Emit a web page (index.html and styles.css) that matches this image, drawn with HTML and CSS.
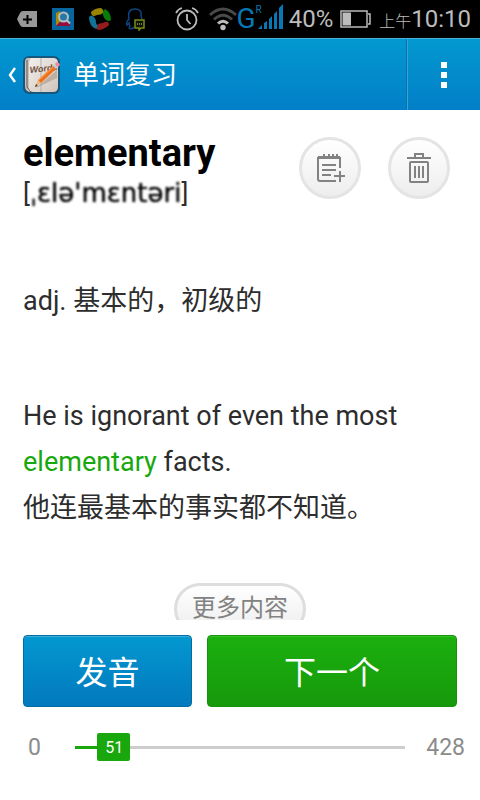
FILE: index.html
```html
<!DOCTYPE html>
<html lang="zh-CN">
<head>
<meta charset="utf-8">
<meta name="viewport" content="width=device-width, initial-scale=1">
<title>单词复习</title>
<link rel="stylesheet" href="styles.css">
</head>
<body>
<div class="status">
  <div class="status-left">
    <svg width="20" height="18" viewBox="0 0 20 18"><path d="M6 1H20V17H6Q4 17 3 15L0 9L3 3Q4 1 6 1Z" fill="#989898"/><path d="M10.500 5V14M6 9.500H15" stroke="#000" stroke-width="2"/></svg>
    <svg width="22" height="22" viewBox="0 0 22 22"><path d="M0 0H22V22H0Z" fill="#07669d"/><path d="M4 5L8 3V14L4 18Z" fill="#aa8b00"/><path d="M4 18L8 14H18V18Z" fill="#970b40"/><circle cx="11.500" cy="9" r="4.500" fill="#2879a3" stroke="#b4bdc3" stroke-width="2"/><path d="M14.500 12L18 15.500" stroke="#b4bdc3" stroke-width="2"/></svg>
    <svg width="22" height="22" viewBox="0 0 22 22"><path d="M2 4Q6 0 12 0Q15 2 14 5Q12 7 8 7Q4 9 3 7Q2 6 2 4Z" fill="#9a8500"/><path d="M16 1Q22 4 22 12Q20 14 17 12Q15 11 14 7Q13 3 16 1Z" fill="#087b09"/><path d="M20 17Q15 22 9 22Q6 20 8 17Q10 15 14 15Q17 13 19 14Q20 15 20 17Z" fill="#931d1d"/><path d="M0 9Q2 6 5 9Q7 11 7 15Q10 19 7 21Q0 18 0 9Z" fill="#117398"/></svg>
    <svg width="20" height="23" viewBox="0 0 20 23" fill="none"><path d="M8 19Q6 22 3 20L4 18Q3 17 3 15L1 17Q0 14 3 11Q1 1 9 1Q16 1 15 8L16 11" stroke="#0c4686" stroke-width="1.500"/><path d="M9 12H18V20H15L13 22V20H9Z" fill="#10150a" stroke="#788d18" stroke-width="1.500"/><path d="M11 16H16.500" stroke="#91a23b" stroke-width="1.500" stroke-dasharray="1 1"/></svg>
  </div>
  <div class="status-right">
    <svg width="24" height="24" viewBox="0 0 24 24" fill="none" stroke="#bcbcbc" stroke-width="1.800"><circle cx="12" cy="13" r="9.500"/><path d="M12 7V13L15.500 17M1 6Q3 2 7 1M17 1Q21 2 23 6"/></svg>
    <svg class="wifi" width="28" height="24" viewBox="0 0 28 24" fill="none" stroke-width="3"><path d="M1 8Q14 -4 27 8" stroke="#494949"/><path d="M5 12.500Q14 4 23 12.500" stroke="#494949"/><path d="M9 16.500Q14 12 19 16.500" stroke="#bcbcbc"/><circle cx="14" cy="20.500" r="2.700" fill="#bcbcbc"/></svg>
    <span class="network">G<sup>R</sup></span>
    <svg class="signal" width="25" height="25" viewBox="0 0 25 25" fill="#0878b4"><path d="M0 25L4 21V25ZM6 19L9 17V25H6ZM11 15L14 12V25H11ZM16 10L19 7V25H16ZM21 4L25 0V25H21Z"/></svg>
    <span class="percent">40%</span>
    <svg class="battery" width="31" height="18" viewBox="0 0 31 18"><path d="M1 1H27V17H1ZM28 4H30V14H28" fill="none" stroke="#bcbcbc" stroke-width="1.500"/><path d="M2.500 2.500H11V15.500H2.500Z" fill="#bcbcbc"/></svg>
    <span class="clock"><small>上午</small>10:10</span>
  </div>
</div>

<header class="bar">
  <button class="back" type="button" aria-label="返回">
    <svg width="8" height="16" viewBox="0 0 8 16"><path d="M7 1L2 8L7 15" fill="none" stroke="#fff" stroke-width="2.400"/></svg>
    <svg width="40" height="40" viewBox="0 0 40 40">
      <defs><linearGradient id="page" x2="1" y2="1"><stop stop-color="#f3efec"/><stop offset="1" stop-color="#cfc5bd"/></linearGradient></defs>
      <rect x="1" y="1" width="37" height="38" rx="6" fill="#15577d"/>
      <path d="M6 3H16L9 37Q3 37 3 31V7Q3 3 6 3Z" fill="#c9c1bc"/>
      <path d="M5 5V32L9 37" fill="none" stroke="#66564e"/>
      <path d="M9 3H31Q36 3 36 8V32Q36 37 31 37H12Q7 37 7 32V7Z" fill="url(#page)"/>
      <path d="M19 3V37" stroke="#b8afa8"/>
      <text x="8" y="18" font-family="Liberation Sans" font-size="9" font-weight="bold" font-style="italic" fill="#70513c" transform="rotate(-6 8 18)">Words</text>
      <path d="M14 33L35 15V23Z" fill="#a99686" opacity=".6"/>
      <path d="M13 32L16 25L19 28Z" fill="#e9b979"/><path d="M16 25L31 11L34 14L19 28Z" fill="#ed721b"/><path d="M17 25L31 12" stroke="#ffa457"/>
      <path d="M31 11L33 9L36 12L34 14Z" fill="#ccc9c8"/><path d="M33 9Q34 6 37 8Q39 10 36 12Z" fill="#ed8aa1"/><path d="M13 32L14 29L16 31Z" fill="#4c3a30"/>
    </svg>
  </button>
  <h1>单词复习</h1>
  <button class="menu" type="button" aria-label="菜单"><i></i><i></i><i></i></button>
</header>

<main class="card">
  <div class="head">
    <div class="entry">
      <h2>elementary</h2>
      <p class="ipa">[<span>ˌɛlə'mɛntəri</span>]</p>
    </div>
    <div class="tools">
      <button class="round" type="button" aria-label="加入生词本">
        <svg width="30" height="30" viewBox="0 0 30 30" fill="none" stroke="#828282" stroke-width="2"><path d="M21 28H5Q3 28 3 26V5H25V15M3 4H25"/><path d="M9 1V5M14 1V5M18 1V5M22 1V5M7 12H21M7 17H21M7 22H16M25 18V29M19 23H30"/></svg>
      </button>
      <button class="round" type="button" aria-label="删除">
        <svg width="26" height="32" viewBox="0 0 26 32" fill="none" stroke="#828282" stroke-width="2"><path d="M1 6H25M9 5V2H17V5"/><rect x="4" y="10" width="18" height="20" rx="1"/><path d="M9 14V26M13 14V26M17 14V26"/></svg>
      </button>
    </div>
  </div>
  <p class="meaning">adj. 基本的，初级的</p>
  <p class="example">He is ignorant of even the most <em>elementary</em> facts.<br>他连最基本的事实都不知道。</p>
  <button class="more" type="button">更多内容</button>
</main>

<footer>
  <div class="actions">
    <button class="speak" type="button">发音</button>
    <button class="next" type="button">下一个</button>
  </div>
  <div class="progress">
    <span class="min">0</span>
    <div class="slider" style="--value: 51; --max: 428">
      <input id="position" type="range" min="0" max="428" value="51" aria-label="进度">
      <output for="position">51</output>
    </div>
    <span class="max">428</span>
  </div>
</footer>
</body>
</html>
```
FILE: styles.css
```css
* { box-sizing: border-box; }
body, h1, h2, p { margin: 0; }
body {
  display: flex;
  flex-direction: column;
  height: 100vh;
  background: #fff;
  color: #2d2d2d;
  font-family: Roboto, "Noto Sans CJK SC", sans-serif;
}
button {
  padding: 0;
  border: 0;
  background: none;
  color: inherit;
  font: inherit;
}
svg { display: block; flex: none; }

.status {
  display: flex;
  flex: none;
  justify-content: space-between;
  height: 38px;
  padding: 0 9px 0 17px;
  background: #000;
  color: #bcbcbc;
}
.status-left, .status-right { display: flex; align-items: center; }
.status-left { gap: 15px; }
.wifi { margin-left: 10px; }
.network { position: relative; color: #0878b4; font-size: 28px; line-height: 34px; }
.network sup { position: absolute; top: 3px; left: 19px; font-size: 10px; line-height: 10px; }
.signal { margin: 0 6px 6px 2px; }
.percent { font-size: 24px; line-height: 38px; }
.battery { margin: 0 8px 0 7px; }
.clock { font-size: 24px; line-height: 38px; white-space: nowrap; }
.clock small { font-size: 16px; font-weight: 300; line-height: 1; }

.bar {
  display: flex;
  flex: none;
  align-items: center;
  height: 72px;
  border-top: 1px solid #49b3d9;
  background: linear-gradient(#0398d0, #027fc8);
  color: #fff;
}
.back { display: flex; align-items: center; gap: 6px; padding: 0 11px 0 8px; }
.bar h1 { flex: 1; font-size: 26px; font-weight: 400; line-height: 40px; }
.menu {
  display: flex;
  flex-direction: column;
  align-items: center;
  align-self: stretch;
  justify-content: center;
  gap: 4px;
  width: 74px;
  border-left: 1px solid #0773a8;
  box-shadow: inset 1px 0 #34a5d8;
}
.menu i { width: 6px; height: 6px; background: #fff; }

.card {
  display: flex;
  flex: 1;
  flex-direction: column;
  min-height: 0;
  padding: 20px 23px 0;
  overflow: hidden;
}
.card > * { flex: none; }
.head { display: flex; justify-content: space-between; }
.entry h2 { color: #000; font-size: 38px; line-height: 46px; }
.ipa { font-size: 26px; line-height: 34px; }
.ipa span {
  color: #000;
  font-family: "DejaVu Sans", sans-serif;
  font-size: 26px;
  text-shadow: 0 0 1px #000;
  filter: blur(1px);
}
.tools { display: flex; gap: 27px; padding: 7px 7px 0 0; }
.round {
  display: grid;
  place-items: center;
  width: 62px;
  height: 62px;
  border: 3px solid #e4e4e4;
  border-radius: 50%;
  background: linear-gradient(#fff, #ededed);
}
.meaning { margin-top: 68px; font-size: 27px; line-height: 46px; }
.example { margin-top: 69px; font-size: 27px; line-height: 46px; }
.example em { color: #18a80d; font-style: normal; }
.more {
  align-self: center;
  width: 132px;
  height: 52px;
  margin-top: 52px;
  padding-bottom: 2px;
  border: 3px solid #dedede;
  border-radius: 26px;
  background: linear-gradient(#fff, #ededed);
  color: #828282;
  font-size: 24px;
  line-height: 36px;
}

footer { flex: none; padding: 15px 0 27px; }
.actions { display: grid; grid-template-columns: 169fr 250fr; gap: 15px; padding: 0 23px; }
.actions button {
  height: 72px;
  padding-bottom: 2px;
  border-radius: 4px;
  color: #fff;
  font-size: 32px;
}
.speak {
  border: 1px solid #026ca5;
  background: linear-gradient(#0398d0, #0279be);
  box-shadow: inset 0 1px #43add8;
}
.next {
  border: 1px solid #159409;
  background: linear-gradient(#1bb00e, #17990c);
  box-shadow: inset 0 1px #38bd2d;
}
.progress {
  display: flex;
  align-items: center;
  justify-content: space-between;
  height: 52px;
  margin-top: 14px;
  padding: 0 15px 0 28px;
  color: #8b8b8b;
  font-size: 23px;
}
.slider {
  --ratio: calc(var(--value) / var(--max) * 100%);
  position: relative;
  flex: 1;
  height: 28px;
  margin: 0 21px 0 34px;
  background: linear-gradient(90deg, #18a80d var(--ratio), #cdcdcd var(--ratio)) center / 100% 3px no-repeat;
}
.slider input {
  display: block;
  appearance: none;
  width: calc(100% + 33px);
  height: 28px;
  margin: 0 -17px;
  background: none;
}
.slider input::-webkit-slider-thumb {
  appearance: none;
  width: 33px;
  height: 28px;
  border-radius: 2px;
  background: #18a80d;
}
.slider output {
  position: absolute;
  top: 0;
  left: var(--ratio);
  transform: translateX(-50%);
  color: #fff;
  font-size: 16px;
  line-height: 30px;
  pointer-events: none;
}
```
